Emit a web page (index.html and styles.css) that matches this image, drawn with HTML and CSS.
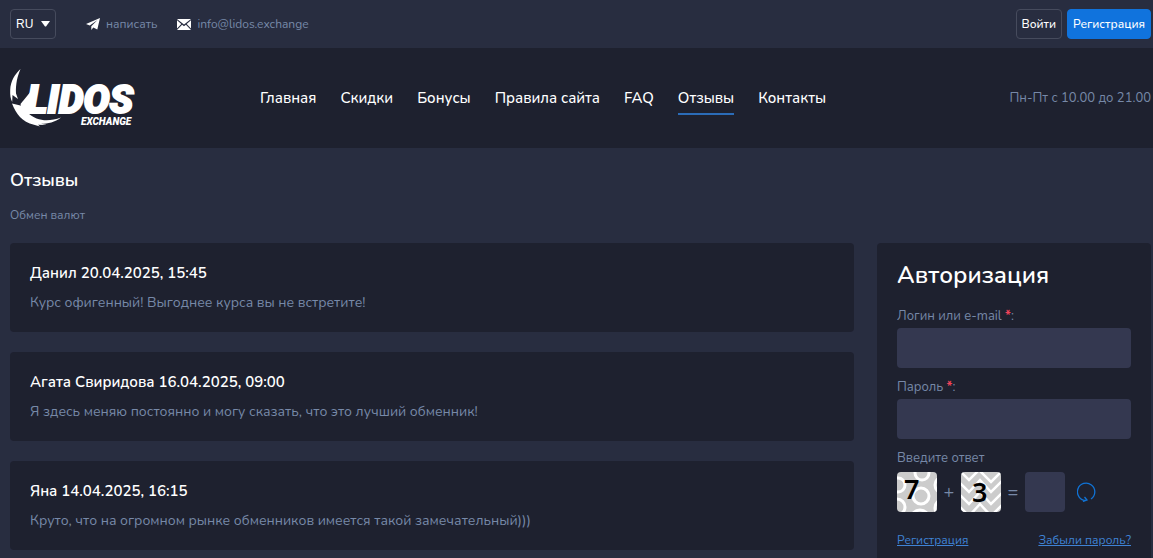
FILE: index.html
```
<!DOCTYPE html>
<html lang="ru">
<head>
  <meta charset="UTF-8">
  <meta name="viewport" content="width=device-width, initial-scale=1.0">
  <title>Отзывы - Lidos Exchange</title>
  <link rel="stylesheet" href="styles.css">
</head>
<body>
  <div class="topbar">
    <select class="lang" aria-label="Язык">
      <option>RU</option>
      <option>EN</option>
    </select>
    <a class="contact" href="#">
      <svg width="14" height="12" viewBox="0 0 14 12" aria-hidden="true"><path fill="#fff" d="M14 0 0 6l3.800 1.600L11.500 2 5.300 8.200V12l2-2.400 4 1.900z"/></svg>
      написать
    </a>
    <a class="contact" href="mailto:info@lidos.exchange">
      <svg width="14" height="11" viewBox="0 0 14 11" aria-hidden="true"><path fill="#fff" d="M0 0h14L7 5.500zM0 1.300 4.300 5 0 9.400zM14 1.300 9.700 5 14 9.400zM5.100 5.700 7 7.200l1.900-1.500L14 11H0z"/></svg>
      info@lidos.exchange
    </a>
    <div class="account">
      <button class="btn" type="button">Войти</button>
      <button class="btn btn-blue" type="button">Регистрация</button>
    </div>
  </div>

  <header class="header">
    <a class="logo" href="#">
      <svg width="130" height="60" viewBox="0 0 130 60" role="img" aria-label="Lidos Exchange">
        <path fill="#fff" d="M10.500 1C5 6 .500 13 .200 22c-.200 5 .300 9 2 12l.300-7 5.500 4-2-5.500C5.500 16 7.500 8 10.500 1zM2 35.500l10.500 2.500c1 3 6 9 14 12.500 8 3 16 2 24.500-1-6 5-13 6-20 6.300l6 1.200-9-.200 2 1.600-6-1.600C12 54 6 46 2 35.500z"/>
        <path fill="#fff" d="M10.500 36 22 22l-2 24h-7z"/>
        <text class="logo-name" x="17" y="45">LIDOS</text>
        <text class="logo-sub" x="71" y="57">EXCHANGE</text>
      </svg>
    </a>
    <nav class="menu">
      <a href="#">Главная</a>
      <a href="#">Скидки</a>
      <a href="#">Бонусы</a>
      <a href="#">Правила сайта</a>
      <a href="#">FAQ</a>
      <a class="active" href="#">Отзывы</a>
      <a href="#">Контакты</a>
    </nav>
    <div class="hours">Пн-Пт с 10.00 до 21.00</div>
  </header>

  <div class="page">
    <h1>Отзывы</h1>
    <a class="crumb" href="#">Обмен валют</a>

    <div class="columns">
      <main class="reviews">
        <article class="review">
          <h2>Данил 20.04.2025, 15:45</h2>
          <p>Курс офигенный! Выгоднее курса вы не встретите!</p>
        </article>
        <article class="review">
          <h2>Агата Свиридова 16.04.2025, 09:00</h2>
          <p>Я здесь меняю постоянно и могу сказать, что это лучший обменник!</p>
        </article>
        <article class="review">
          <h2>Яна 14.04.2025, 16:15</h2>
          <p>Круто, что на огромном рынке обменников имеется такой замечательный)))</p>
        </article>
      </main>

      <aside class="auth">
        <h2>Авторизация</h2>
        <form>
          <label for="login">Логин или e-mail <span class="req">*</span>:</label>
          <input type="text" id="login">
          <label for="pass">Пароль <span class="req">*</span>:</label>
          <input type="password" id="pass">
          <label for="answer">Введите ответ</label>
          <div class="captcha">
            <svg class="digit" width="40" height="40" viewBox="0 0 40 40">
              <g fill="none" stroke="#fff" stroke-width="3">
                <circle cx="24" cy="24" r="8"/>
                <circle cx="1" cy="13" r="7"/>
                <circle cx="0" cy="35" r="8"/>
                <circle cx="25" cy="1" r="7"/>
                <circle cx="23" cy="47" r="9"/>
                <circle cx="46" cy="13" r="8"/>
                <circle cx="47" cy="36" r="9"/>
              </g>
              <text x="7" y="27">7</text>
            </svg>
            <span>+</span>
            <svg class="digit" width="40" height="40" viewBox="0 0 40 40">
              <path fill="none" stroke="#fff" stroke-width="2.500" d="M-2-2 8 8 18-2 30 10 42-2M-2 10 8 20 19 8 30 20 42 8M-2 22 8 32 19 20 30 32 42 20M-2 34 8 44 19 32 30 44 42 32"/>
              <text x="11" y="30">3</text>
            </svg>
            <span>=</span>
            <input type="text" id="answer">
            <button class="reload" type="button" aria-label="Обновить">
              <svg width="20" height="20" viewBox="0 0 20 20"><path fill="none" stroke="#1073d6" stroke-width="1.300" d="M14 17A8.700 8.700 0 1 0 9 18.500M7.500 15l2.500 3-4 1.500"/></svg>
            </button>
          </div>
          <div class="links">
            <a href="#">Регистрация</a>
            <a href="#">Забыли пароль?</a>
          </div>
        </form>
      </aside>
    </div>
  </div>
</body>
</html>
```
FILE: styles.css
```
* {
  box-sizing: border-box;
}

body {
  margin: 0;
  font-family: Nunito, "Noto Sans", sans-serif;
  font-size: 13px;
  line-height: 20px;
  color: #7789a8;
  background: #282d40;
}

h1, h2, p {
  margin: 0;
}

a {
  color: inherit;
  text-decoration: none;
}

.topbar {
  display: flex;
  align-items: center;
  height: 48px;
  padding: 0 2px 0 10px;
  font-size: 12px;
}

.lang {
  appearance: none;
  width: 46px;
  height: 30px;
  margin-right: 30px;
  padding: 0 5px;
  border: 1px solid #464b5d;
  border-radius: 4px;
  font-family: "Liberation Sans", Arial, sans-serif;
  font-size: 12px;
  color: #fff;
  background: url("data:image/svg+xml,%3Csvg xmlns='http://www.w3.org/2000/svg' width='9' height='6'%3E%3Cpath fill='white' d='M0 0h9L5 5.500H4z'/%3E%3C/svg%3E") no-repeat right 5px center;
}

.contact {
  display: flex;
  align-items: center;
  gap: 6px;
  margin-right: 20px;
}

.account {
  display: flex;
  gap: 5px;
  margin-left: auto;
}

.btn {
  height: 30px;
  padding: 0 5px;
  border: 1px solid #464b5d;
  border-radius: 4px;
  font-family: inherit;
  font-size: 12px;
  font-weight: 500;
  color: #fff;
  background: none;
  cursor: pointer;
}

.btn-blue {
  border-color: #1073dd;
  background: #1073dd;
}

.header {
  display: flex;
  align-items: center;
  height: 100px;
  padding: 0 2px 0 10px;
  background: #1e212f;
}

.logo {
  display: flex;
  width: 250px;
}

.logo-name,
.logo-sub {
  font-family: Roboto, sans-serif;
  font-weight: 900;
  font-style: italic;
  fill: #fff;
}

.logo-name {
  font-size: 39px;
  stroke: #fff;
  stroke-width: 2px;
}

.logo-sub {
  font-size: 10px;
}

.menu {
  display: flex;
  gap: 24px;
  font-size: 15px;
  font-weight: 500;
  color: #fff;
  white-space: nowrap;
}

.menu a {
  padding: 7px 0 5px;
  border-bottom: 2px solid transparent;
}

.menu .active {
  border-color: #2b6cb8;
}

.hours {
  margin-left: auto;
}

.page {
  padding: 20px 2px 20px 10px;
}

h1 {
  margin-bottom: 15px;
  font-size: 18px;
  line-height: 24px;
  font-weight: 600;
  color: #fff;
}

.crumb {
  display: block;
  margin-bottom: 20px;
  font-size: 12px;
  line-height: 16px;
}

.columns {
  display: flex;
  align-items: flex-start;
  gap: 23px;
}

.reviews {
  display: grid;
  flex: 1;
  gap: 20px;
}

.review {
  padding: 20px 20px 19px;
  border-radius: 4px;
  font-size: 14px;
  background: #1e212f;
}

.review h2 {
  margin-bottom: 10px;
  font-size: 15px;
  line-height: 20px;
  font-weight: 600;
  color: #fff;
}

.auth {
  width: 274px;
  padding: 20px;
  border-radius: 4px;
  background: #1e212f;
}

.auth h2 {
  margin-bottom: 19px;
  font-size: 24px;
  line-height: 24px;
  font-weight: 600;
  color: #fff;
}

.auth label {
  display: block;
  margin-bottom: 2px;
}

.auth input {
  display: block;
  width: 100%;
  height: 40px;
  margin-bottom: 9px;
  padding: 0 10px;
  border: none;
  border-radius: 4px;
  font-family: inherit;
  color: #fff;
  background: #343850;
}

.req {
  font-weight: 700;
  color: #f04359;
}

.captcha {
  display: flex;
  align-items: center;
  margin: 4px 0 18px;
}

.captcha span {
  width: 24px;
  text-align: center;
  font-size: 18px;
}

.auth .captcha input {
  width: 40px;
  margin: 0;
}

.digit {
  border-radius: 4px;
  background: #ccc;
}

.digit text {
  font-family: "Noto Sans", sans-serif;
  font-size: 27px;
  font-weight: 600;
  fill: #000;
}

.reload {
  display: flex;
  margin-left: 12px;
  padding: 0;
  border: none;
  background: none;
  cursor: pointer;
}

.links {
  display: flex;
  justify-content: space-between;
  font-size: 12px;
  color: #3f83d5;
}

.links a {
  text-decoration: underline;
}
```
